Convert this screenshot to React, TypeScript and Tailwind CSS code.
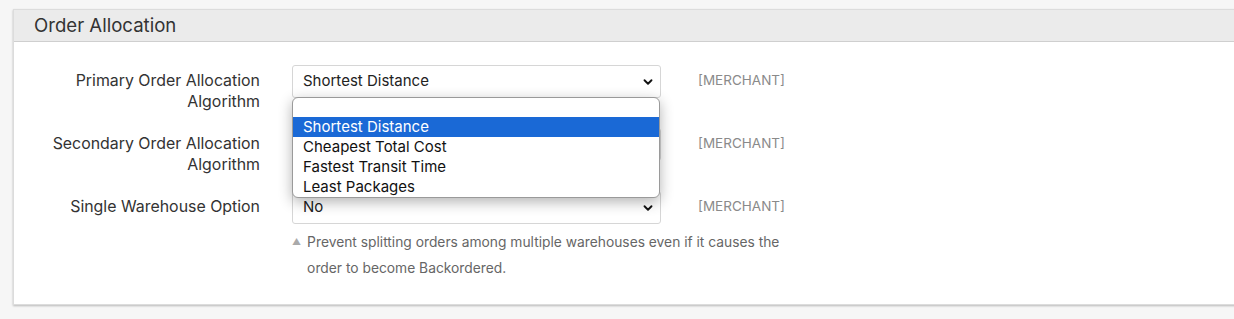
import { ChevronDown } from "lucide-react"

const font = { fontFamily: "Inter, 'Noto Sans', sans-serif" }

function FakeSelect({ value }: { value: string }) {
  return (
    <div className="flex h-[33px] w-[369px] items-center justify-between rounded-[3px] border border-[#d6d6d6] bg-white pl-[10px] pr-[5px] text-[15px] text-[#222]">
      <span>{value}</span>
      <ChevronDown className="h-[14px] w-[14px] text-[#111]" strokeWidth={3.2} />
    </div>
  )
}

const options = ["Shortest Distance", "Cheapest Total Cost", "Fastest Transit Time", "Least Packages"]

export default function App() {
  return (
    <div className="h-[319px] w-full overflow-hidden bg-[#f6f6f6] pt-[9px]" style={font}>
      <div className="ml-[13px] w-[1240px] border border-[#dcdcdc] bg-white shadow-[0_1px_2px_rgba(0,0,0,0.25)]">
        <div className="flex h-[32px] items-center border-b border-[#cfcfcf] bg-[#ebebeb] pl-[20px] text-[18.6px] text-[#333]">
          Order Allocation
        </div>

        <div className="pb-[23px] pt-[23px]">
          {/* row 1 */}
          <div className="flex h-[63px] items-start">
            <div className="mt-[5px] w-[246px] text-right text-[15.9px] leading-[21px] text-[#333]">
              Primary Order Allocation
              <br />
              Algorithm
            </div>
            <div className="relative ml-[32px]">
              <FakeSelect value="Shortest Distance" />
              <div className="absolute left-0 top-[32px] z-10 w-[368px] overflow-hidden rounded-[6px] border border-[#9a9a9a] bg-white text-[15px] text-[#111] shadow-[0_4px_14px_rgba(0,0,0,0.3)]">
                <div className="h-[19px]" />
                {options.map((o, i) => (
                  <div
                    key={o}
                    className={
                      i === 0
                        ? "flex h-5 items-center bg-[#1a69d6] pl-[10px] text-white"
                        : "flex h-5 items-center pl-[10px]"
                    }
                  >
                    {o}
                  </div>
                ))}
              </div>
            </div>
            <div className="ml-[37px] mt-[5px] text-[13.5px] leading-[20px] text-[#8a8a8a]">[MERCHANT]</div>
          </div>

          {/* row 2 */}
          <div className="flex h-[63px] items-start">
            <div className="mt-[5px] w-[246px] text-right text-[15.9px] leading-[21px] text-[#333]">
              Secondary Order Allocation
              <br />
              Algorithm
            </div>
            <div className="ml-[32px]">
              <FakeSelect value="Cheapest Total Cost" />
            </div>
            <div className="ml-[37px] mt-[5px] text-[13.5px] leading-[20px] text-[#8a8a8a]">[MERCHANT]</div>
          </div>

          {/* row 3 */}
          <div className="flex items-start">
            <div className="mt-[5px] w-[246px] text-right text-[15.9px] leading-[21px] text-[#333]">
              Single Warehouse Option
            </div>
            <div className="ml-[32px] flex flex-col">
              <div className="flex items-start">
                <FakeSelect value="No" />
                <div className="ml-[37px] mt-[5px] text-[13.5px] leading-[20px] text-[#8a8a8a]">[MERCHANT]</div>
              </div>
              <div className="mt-[5px] flex w-[510px] items-start text-[13.8px] leading-[26px] text-[#666]">
                <span className="mr-[6px] text-[9px] text-[#aaa]">▲</span>
                <span>
                  Prevent splitting orders among multiple warehouses even if it causes the
                  <br />
                  order to become Backordered.
                </span>
              </div>
            </div>
          </div>
        </div>
      </div>
    </div>
  )
}
